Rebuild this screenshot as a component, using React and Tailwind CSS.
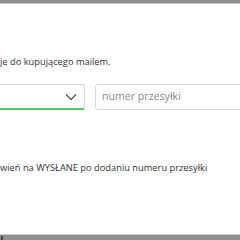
export default function App() {
  return (
    <div className="w-[240px] h-[240px] overflow-hidden bg-white flex flex-col" style={{ fontFamily: '"Open Sans", sans-serif' }}>
      <div className="h-[4px] bg-[#8f8f8f] border-b border-[#c8c8c8]" />
      <div className="flex-1 flex flex-col">
        <div className="mt-[51px] text-[9.3px] leading-[13px] text-[#333] whitespace-nowrap">je do kupującego mailem.</div>
        <div className="mt-[16px] flex items-center gap-[10px]">
          <div className="w-[86px] h-[26px] -ml-px border border-[#d8d8d8] border-b-2 border-b-[#5cc66a] rounded-r-[3px] flex items-center justify-end pr-[7px]">
            <svg width="12" height="8" viewBox="0 0 12 8" fill="none" stroke="#555" strokeWidth="1.3"><path d="M1 1.5 L6 6.5 L11 1.5" /></svg>
          </div>
          <div className="flex-1 h-[26px] border border-[#d8d8d8] rounded-l-[3px] -mr-px flex items-center pl-[6px] text-[10.6px] text-[#8a8a8a]">numer przesyłki</div>
        </div>
        <div className="mt-[51px] text-[9.3px] leading-[13px] text-[#333] whitespace-nowrap">wień na WYSŁANE po dodaniu numeru przesyłki</div>
      </div>
      <div className="h-[6px] bg-[#8f8f8f] border-t border-[#c8c8c8] relative">
        <div className="absolute left-[1px] bottom-0 w-[2px] h-[4px] bg-[#444]" />
      </div>
    </div>
  );
}
